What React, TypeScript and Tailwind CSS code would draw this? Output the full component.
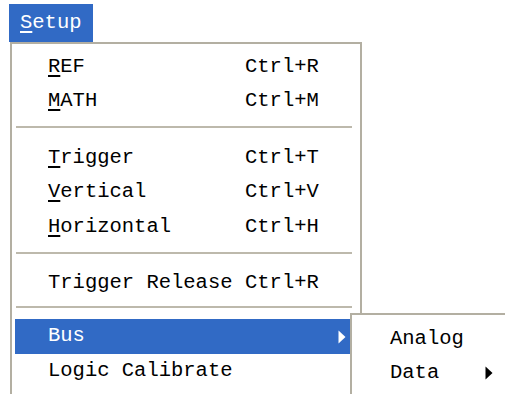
import React from "react"

const mono = { fontFamily: '"Liberation Mono", "DejaVu Sans Mono", monospace' }

function Arrow({ color }: { color: string }) {
    return (
        <svg width="8" height="14" viewBox="0 0 8 14" className="block shrink-0">
            <polygon points="0.5,0.5 7.5,7 0.5,13.5" fill={color} />
        </svg>
    )
}

function Item({ label, u, shortcut, h, arrow, active }: { label: string, u?: number, shortcut?: string, h: string, arrow?: boolean, active?: boolean }) {
    const text = u === undefined ? label : (
        <>
            {label.slice(0, u)}<span className="underline underline-offset-[3px]">{label[u]}</span>{label.slice(u + 1)}
        </>
    )
    return (
        <div className={`flex items-center ${h} pl-[33px] pr-[11px] ${active ? "bg-[#316ac5] text-white" : "text-black"}`}>
            <span className="w-[197px] shrink-0 whitespace-pre">{text}</span>
            <span className="flex-1 whitespace-pre">{shortcut}</span>
            {arrow && <Arrow color={active ? "#ffffff" : "#000000"} />}
        </div>
    )
}

function Sep({ pt, pb }: { pt: string, pb: string }) {
    return (
        <div className={`${pt} ${pb} pl-[1px] pr-[5px]`}>
            <div className="h-[2px] bg-[#bdb9ac]" />
        </div>
    )
}

export default function App() {
    return (
        <div className="relative w-[505px] h-[394px] overflow-hidden bg-white text-[20.5px] leading-none" style={mono}>
            <div className="pl-[9px] pt-[4px]">
                <div className="w-[84px] h-[38px] bg-[#316ac5] text-white flex items-center pl-[11px]">
                    <span><span className="underline underline-offset-[3px]">S</span>etup</span>
                </div>
                <div className="ml-[1px] w-[352px] h-[400px] border-2 border-b-0 border-[#b3afa2] bg-white pt-[6px] pl-[3px] pr-[3px]">
                    <Item label="REF" u={0} shortcut="Ctrl+R" h="h-[34px]" />
                    <Item label="MATH" u={0} shortcut="Ctrl+M" h="h-[34px]" />
                    <Sep pt="pt-[8px]" pb="pb-[13px]" />
                    <Item label="Trigger" u={0} shortcut="Ctrl+T" h="h-[34px]" />
                    <Item label="Vertical" u={0} shortcut="Ctrl+V" h="h-[35px]" />
                    <Item label="Horizontal" u={0} shortcut="Ctrl+H" h="h-[35px]" />
                    <Sep pt="pt-[7px]" pb="pb-[12px]" />
                    <Item label="Trigger Release" shortcut="Ctrl+R" h="h-[34px]" />
                    <Sep pt="pt-[6px]" pb="pb-[11px]" />
                    <Item label="Bus" h="h-[35px]" arrow active />
                    <Item label="Logic Calibrate" h="h-[35px]" />
                </div>
            </div>

            {/* submenu */}
            <div className="absolute left-[350px] top-[313px] w-[170px] h-[100px] border-2 border-r-0 border-b-0 border-[#b3afa2] bg-white pt-[7px]">
                <div className="flex items-center h-[34px] pl-[38px]">Analog</div>
                <div className="flex items-center h-[34px] pl-[38px]">
                    <span className="w-[95px] shrink-0">Data</span>
                    <Arrow color="#000000" />
                </div>
            </div>
        </div>
    )
}
